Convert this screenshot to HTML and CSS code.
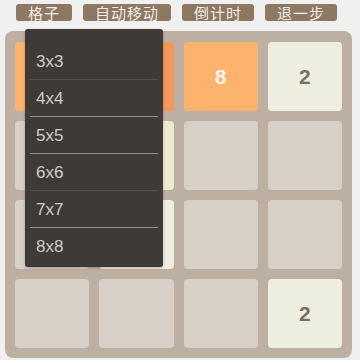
FILE: index.html
```html
<!DOCTYPE html>
<html lang="zh">
<head>
    <meta charset="UTF-8">
    <meta name="viewport" content="width=device-width, initial-scale=1.0">
    <title>2048</title>
    <link rel="stylesheet" href="styles.css">
</head>
<body>
    <div class="toolbar">
        <button class="tool-btn">格子</button>
        <button class="tool-btn">自动移动</button>
        <button class="tool-btn">倒计时</button>
        <button class="tool-btn">退一步</button>
    </div>
    <div class="board">
        <div class="tile t8"></div>
        <div class="tile t16"></div>
        <div class="tile t8">8</div>
        <div class="tile t2">2</div>

        <div class="tile"></div>
        <div class="tile t4"></div>
        <div class="tile"></div>
        <div class="tile"></div>

        <div class="tile"></div>
        <div class="tile t2"></div>
        <div class="tile"></div>
        <div class="tile"></div>

        <div class="tile"></div>
        <div class="tile"></div>
        <div class="tile"></div>
        <div class="tile t2">2</div>
    </div>

    <div class="size-menu">
        <div class="menu-item">3x3</div>
        <div class="menu-item sep-dark">4x4</div>
        <div class="menu-item sep-light">5x5</div>
        <div class="menu-item sep-light">6x6</div>
        <div class="menu-item sep-dark">7x7</div>
        <div class="menu-item sep-light">8x8</div>
    </div>
</body>
</html>
```

FILE: styles.css
```css
body {
    margin: 0;
    background-color: #f0f0f0;
    font-family: "Liberation Sans", Arial, "Noto Sans CJK SC", sans-serif;
    width: 360px;
    height: 360px;
    overflow: hidden;
    position: relative;
}
.toolbar {
    display: flex;
    gap: 11px;
    padding: 4px 0 0 16px;
}
.tool-btn {
    height: 17px;
    padding: 0 12px;
    border: none;
    border-radius: 3px;
    background-color: #8d7862;
    color: #f1ede6;
    font-family: "Noto Sans CJK SC", sans-serif;
    font-size: 15px;
    line-height: 17px;
    letter-spacing: 1px;
}
.board {
    margin: 10px 0 0 5px;
    width: 347px;
    box-sizing: border-box;
    padding: 11px 10px 10px 10px;
    background-color: #bdb0a2;
    border-radius: 8px;
    display: grid;
    grid-template-columns: repeat(4, 1fr);
    grid-auto-rows: 69px;
    gap: 10px;
}
.tile {
    background-color: #d8cfc6;
    border-radius: 4px;
    display: flex;
    align-items: center;
    justify-content: center;
    font-size: 21px;
    font-weight: bold;
    color: #776e65;
}
.t2 {
    background-color: #eeeee0;
}
.t4 {
    background-color: #edeace;
}
.t8 {
    background-color: #fcb36d;
    color: #f9f6f2;
}
.t16 {
    background-color: #f7985b;
    color: #f9f6f2;
}
.size-menu {
    position: absolute;
    left: 25px;
    top: 29px;
    width: 138px;
    height: 238px;
    box-sizing: border-box;
    padding: 13px 5px 0 5px;
    background-color: #3e3a38;
    border-radius: 3px;
    box-shadow: 0 1px 3px rgba(0, 0, 0, 0.25);
}
.menu-item {
    height: 37px;
    line-height: 37px;
    padding-left: 6px;
    color: #cfcbc7;
    font-size: 17px;
    border-top: 1px solid transparent;
    box-sizing: border-box;
}
.sep-dark {
    border-top-color: #56514e;
}
.sep-light {
    border-top-color: #8e8a87;
}
```
